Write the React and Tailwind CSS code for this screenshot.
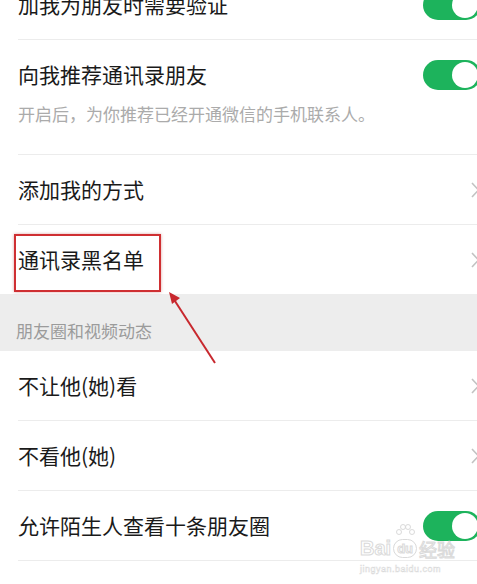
import React from 'react';

const font = { fontFamily: '"Noto Sans CJK SC", "Noto Sans", sans-serif' };

const Toggle = () => (
  <div className="w-[58px] h-[30px] rounded-full bg-[#1db35c] flex items-center justify-end pr-[3px] -mr-[4px] shrink-0">
    <div className="w-[26px] h-[26px] rounded-full bg-white" />
  </div>
);

const Chevron = () => (
  <svg width="10" height="18" viewBox="0 0 10 18" className="-mr-[3px] shrink-0">
    <path d="M2 2 L8.5 9 L2 16" fill="none" stroke="#c2c2c2" strokeWidth="1.6" />
  </svg>
);

const Row = ({ title, right, sub, last }) => (
  <div className="pl-[18px]">
    <div className={`${last ? '' : 'border-b border-[#ececec]'}`}>
      <div className="flex items-center justify-between h-[69px]">
        <span className="text-[21px] text-[#1a1a1a] leading-none">{title}</span>
        {right === 'toggle' ? <Toggle /> : right === 'chevron' ? <Chevron /> : null}
      </div>
      {sub && (
        <div className="text-[17px] text-[#ababab] leading-none -mt-[4px] pb-[32px]">{sub}</div>
      )}
    </div>
  </div>
);

const outline = { fontFamily: '"Liberation Sans", sans-serif', WebkitTextStroke: '1px #dadada', color: 'white' };

export default function App() {
  return (
    <div className="relative w-[477px] h-[584px] overflow-hidden bg-white" style={font}>
      <div className="-mt-[30px]">
        <Row title="加我为朋友时需要验证" right="toggle" />
        <Row title="向我推荐通讯录朋友" right="toggle" sub="开启后，为你推荐已经开通微信的手机联系人。" />
        <Row title="添加我的方式" right="chevron" />
        <Row title="通讯录黑名单" right="chevron" last />
        <div className="bg-[#ededed] h-[57px] pl-[16px] flex items-center">
          <span className="text-[17px] text-[#9b9b9b] leading-none pt-[15px]">朋友圈和视频动态</span>
        </div>
        <Row title="不让他(她)看" right="chevron" />
        <Row title="不看他(她)" right="chevron" />
        <Row title="允许陌生人查看十条朋友圈" right="toggle" />
        <Row title="朋友圈更新提醒" right="chevron" />
      </div>

      {/* red highlight box */}
      <div className="absolute left-[14px] top-[234px] w-[147px] h-[58px] border-2 border-[#cf2f32] shadow-[0_0_3px_rgba(160,0,0,0.35)]" />

      {/* arrow */}
      <svg className="absolute left-0 top-0" width="477" height="584">
        <line x1="215" y1="363" x2="173" y2="298" stroke="#c8282e" strokeWidth="2" />
        <polygon points="169,292 180,298 172,304" fill="#c8282e" />
      </svg>

      {/* watermark */}
      <div className="absolute left-[360px] top-[520px] flex flex-col items-start pointer-events-none">
        <div className="flex items-end h-[38px]">
          <span className="text-[20px] leading-none font-bold" style={outline}>Bai</span>
          <div className="relative flex flex-col items-center mx-[2px]">
            <svg width="22" height="18" viewBox="0 0 22 18" className="mb-[-2px]">
              <circle cx="5" cy="9" r="2.5" fill="none" stroke="#dadada" />
              <circle cx="9" cy="4" r="2.5" fill="none" stroke="#dadada" />
              <circle cx="14" cy="4" r="2.5" fill="none" stroke="#dadada" />
              <circle cx="18" cy="9" r="2.5" fill="none" stroke="#dadada" />
            </svg>
            <span className="text-[13px] leading-none font-bold rounded-full border border-[#dadada] px-[3px] py-[2px]" style={outline}>du</span>
          </div>
          <span className="text-[18px] leading-none" style={{ ...font, WebkitTextStroke: '1px #dadada', color: 'white' }}>经验</span>
        </div>
        <span className="text-[9px] leading-none mt-[7px] tracking-[0.5px]" style={{ ...outline, WebkitTextStroke: '0.5px #dadada' }}>jingyan.baidu.com</span>
      </div>
    </div>
  );
}
